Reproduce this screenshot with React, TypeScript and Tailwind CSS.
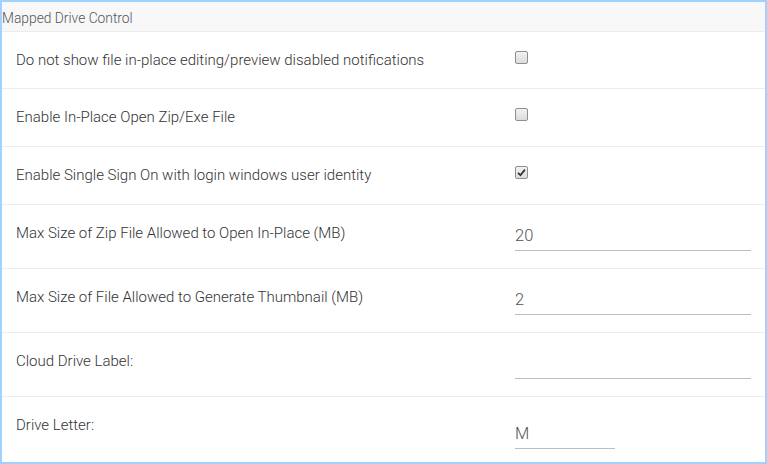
const FONT = "font-['Roboto',_'Liberation_Sans',_sans-serif]";

type Row =
  | { kind: "check"; label: string; checked: boolean }
  | { kind: "input"; label: string; value: string; narrow?: boolean };

const ROWS: { row: Row; height: string }[] = [
  { row: { kind: "check", label: "Do not show file in-place editing/preview disabled notifications", checked: false }, height: "h-[57px]" },
  { row: { kind: "check", label: "Enable In-Place Open Zip/Exe File", checked: false }, height: "h-[58px]" },
  { row: { kind: "check", label: "Enable Single Sign On with login windows user identity", checked: true }, height: "h-[58px]" },
  { row: { kind: "input", label: "Max Size of Zip File Allowed to Open In-Place (MB)", value: "20" }, height: "h-[64px]" },
  { row: { kind: "input", label: "Max Size of File Allowed to Generate Thumbnail (MB)", value: "2" }, height: "h-[64px]" },
  { row: { kind: "input", label: "Cloud Drive Label:", value: "" }, height: "h-[64px]" },
  { row: { kind: "input", label: "Drive Letter:", value: "M", narrow: true }, height: "h-[65px]" },
];

function CheckBox({ checked }: { checked: boolean }) {
  return (
    <span className="mt-[19px] flex h-[13px] w-[13px] items-center justify-center rounded-[2px] border border-[#8f8f8f] bg-gradient-to-b from-[#f2f2f2] to-[#dcdcdc]">
      {checked && (
        <svg viewBox="0 0 10 10" className="h-[9px] w-[9px]">
          <path d="M1.2 5.4 L3.8 8 L8.8 1.8" fill="none" stroke="#333" strokeWidth="2" />
        </svg>
      )}
    </span>
  );
}

function TextField({ value, narrow, last }: { value: string; narrow?: boolean; last?: boolean }) {
  return (
    <div
      className={[
        "flex h-[30px] items-end border-b border-[#bdbdbd] pb-[5px] text-[16.5px] font-light leading-[18px] text-[#555]",
        narrow ? "w-[100px]" : "w-[236px]",
        last ? "mt-[22px]" : "mt-[16px]",
      ].join(" ")}
    >
      {value}
    </div>
  );
}

export default function App() {
  return (
    <div className={`box-border h-[464px] w-[767px] overflow-hidden border-2 border-[#9fd2ff] bg-white ${FONT}`}>
      <div className="h-[30px] border-b border-[#ececec] bg-[#f8f8f8] pt-[9px] text-[13.8px] font-light leading-[15px] text-[#555]">
        Mapped Drive Control
      </div>
      {ROWS.map(({ row, height }, index) => (
        <div
          key={row.label}
          className={[
            "flex",
            height,
            index < ROWS.length - 1 ? "border-b border-[#ececec]" : "",
          ].join(" ")}
        >
          <div className="w-[513px] shrink-0 pl-[14px] pt-[19px] text-[15px] font-light leading-[18px] text-[#333]">
            {row.label}
          </div>
          <div className="flex flex-col">
            {row.kind === "check" ? (
              <CheckBox checked={row.checked} />
            ) : (
              <TextField value={row.value} narrow={row.narrow} last={index === ROWS.length - 1} />
            )}
          </div>
        </div>
      ))}
    </div>
  );
}
